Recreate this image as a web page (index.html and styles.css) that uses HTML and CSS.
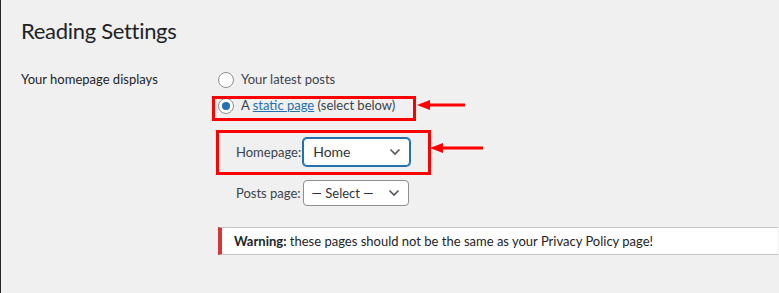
FILE: index.html
```html
<!DOCTYPE html>
<html lang="en">
<head>
    <meta charset="UTF-8">
    <meta name="viewport" content="width=device-width, initial-scale=1.0">
    <title>Reading Settings</title>
    <link rel="stylesheet" href="styles.css">
</head>
<body>
    <div class="wrap">
        <h1>Reading Settings</h1>

        <div class="form-row">
            <div class="row-label">Your homepage displays</div>
            <div class="row-field">
                <label class="radio">
                    <span class="radio-dot"></span>
                    Your latest posts
                </label>
                <label class="radio checked">
                    <span class="radio-dot"></span>
                    <span>A <a href="#">static page</a> (select below)</span>
                </label>

                <div class="page-selects">
                    <label class="select-row first">
                        Homepage:
                        <span class="select focused">
                            Home
                            <svg class="chevron" viewBox="0 0 12 8" width="12" height="8"><path d="M1.5 1.5 6 6l4.5-4.5" fill="none" stroke="#50575e" stroke-width="1.6"/></svg>
                        </span>
                    </label>
                    <label class="select-row">
                        Posts page:
                        <span class="select">
                            — Select —
                            <svg class="chevron" viewBox="0 0 12 8" width="12" height="8"><path d="M1.5 1.5 6 6l4.5-4.5" fill="none" stroke="#50575e" stroke-width="1.6"/></svg>
                        </span>
                    </label>
                </div>

                <div class="notice">
                    <p><strong>Warning:</strong> these pages should not be the same as your Privacy Policy page!</p>
                </div>
            </div>
        </div>
    </div>

    <!-- annotations drawn over the screenshot -->
    <div class="mark mark-static"></div>
    <div class="mark mark-home"></div>
    <svg class="arrow arrow-static" width="50" height="12" viewBox="0 0 50 12">
        <path d="M10 6H48" stroke="#f00" stroke-width="3"/>
        <path d="M0 6 13 1V11Z" fill="#f00"/>
    </svg>
    <svg class="arrow arrow-home" width="54" height="12" viewBox="0 0 54 12">
        <path d="M10 6H53" stroke="#f00" stroke-width="3"/>
        <path d="M0 6 13 1V11Z" fill="#f00"/>
    </svg>
</body>
</html>
```

FILE: styles.css
```css
body {
    margin: 0;
    height: 293px;
    overflow: hidden;
    background-color: #f0f0f1;
    border-left: 1px solid #23282d;
    color: #1d2327;
    font-family: Lato, "Open Sans", sans-serif;
    font-size: 13px;
    line-height: 20px;
    position: relative;
}

.wrap {
    padding-left: 20px;
}

h1 {
    margin: 16px 0 0;
    font-size: 22px;
    font-weight: 400;
    line-height: 29px;
    letter-spacing: -0.3px;
}

.form-row {
    display: flex;
    margin-top: 24px;
}

.row-label {
    flex: none;
    width: 197px;
    color: #1d2327;
}

.row-field {
    flex: 1;
    min-width: 0;
}

.radio {
    display: flex;
    align-items: center;
    height: 20px;
    margin-bottom: 6px;
    color: #3c434a;
}

.radio-dot {
    width: 14px;
    height: 14px;
    margin: 1px 7px 0 0;
    border: 1px solid #8c8f94;
    border-radius: 50%;
    background-color: #fff;
    display: flex;
    align-items: center;
    justify-content: center;
}

.checked .radio-dot::after {
    content: "";
    width: 8px;
    height: 8px;
    border-radius: 50%;
    background-color: #2271b1;
}

.radio a {
    color: #2271b1;
}

.page-selects {
    padding-left: 18px;
}

.select-row {
    display: flex;
    align-items: center;
    color: #3c434a;
    margin-top: 14px;
}

.select-row.first {
    margin-top: 23px;
}

.select {
    margin-left: 2px;
    width: 106px;
    height: 26px;
    box-sizing: border-box;
    border: 1px solid #8c8f94;
    border-radius: 4px;
    background-color: #fff;
    display: flex;
    align-items: center;
    justify-content: space-between;
    padding: 0 8px;
    color: #2c3338;
}

.select.focused {
    height: 28px;
    width: 107px;
    border-color: #2271b1;
    box-shadow: 0 0 0 1px #2271b1;
    padding-left: 9px;
    font-size: 14px;
}

.chevron {
    flex: none;
}

.notice {
    margin-top: 21px;
    width: 560px;
    box-sizing: border-box;
    background-color: #fff;
    border: 1px solid #c3c4c7;
    border-right: 0;
    border-left: 4px solid #d63638;
    padding: 0 12px;
}

.notice p {
    margin: 3px 0;
}

/* annotation overlays */
.mark {
    position: absolute;
    border: 3px solid #f00;
    box-sizing: border-box;
}

.mark-static {
    left: 211px;
    top: 96px;
    width: 204px;
    height: 25px;
}

.mark-home {
    left: 215px;
    top: 130px;
    width: 215px;
    height: 45px;
}

.arrow {
    position: absolute;
}

.arrow-static {
    left: 416px;
    top: 99px;
}

.arrow-home {
    left: 429px;
    top: 142px;
}
```
